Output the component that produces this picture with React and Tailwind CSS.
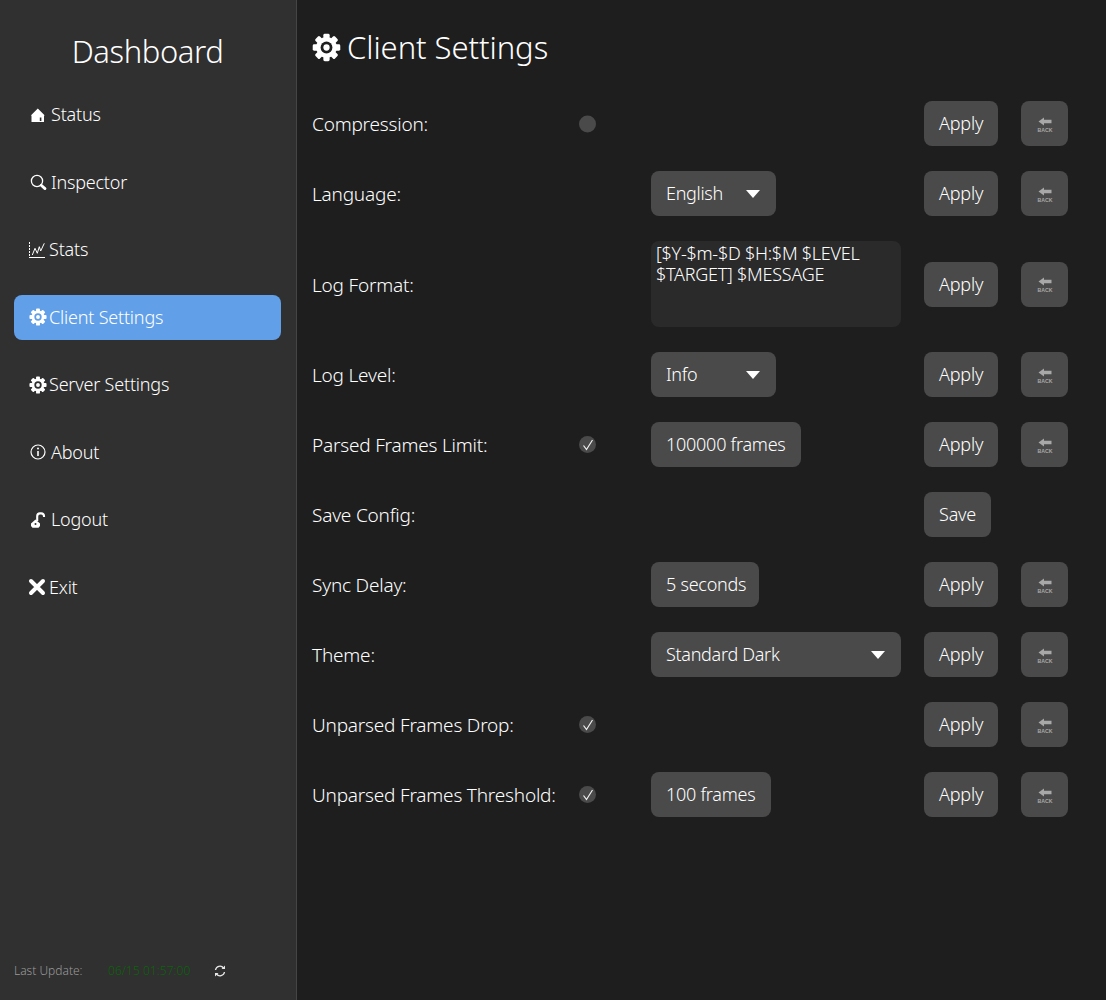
const FONT = "font-['Noto_Sans','Open_Sans',sans-serif]";

function Gear({ size = 18 }) {
  return (
    <svg width={size} height={size} viewBox="0 0 24 24" fill="currentColor" className="shrink-0">
      {[0, 45, 90, 135].map((a) => (
        <rect key={a} x="9.4" y="0.6" width="5.2" height="22.8" rx="1.2" transform={`rotate(${a} 12 12)`} />
      ))}
      <circle cx="12" cy="12" r="8.6" />
      <circle cx="12" cy="12" r="4.9" fill="var(--gear-bg)" />
      <circle cx="12" cy="12" r="2.6" />
    </svg>
  );
}

const Home = () => (
  <svg width="16" height="16" viewBox="0 0 16 16" fill="currentColor" fillRule="evenodd" className="shrink-0">
    <path d="M7.8 1.5 14.8 8.5H14V15H1.5V8.5H.8zM9.8 10.5V14H11.4V10.5z" />
  </svg>
);
const Search = () => (
  <svg width="18" height="18" viewBox="0 0 18 18" fill="none" stroke="currentColor" className="shrink-0">
    <circle cx="8" cy="8" r="5.6" strokeWidth="1.3" />
    <path d="M12.2 12.2 16 15.6" strokeWidth="2.8" strokeLinecap="round" />
  </svg>
);
const Chart = () => (
  <svg width="16" height="16" viewBox="0 0 16 16" fill="none" stroke="currentColor" className="shrink-0">
    <path d="M.5 0v15" strokeWidth="1" strokeDasharray="2 1" />
    <path d="M0 15.5H16" strokeWidth="1" />
    <path d="M3.3 13 6 6.3l2.3 5 2-6.6L11.7 9l3.6-7.7" strokeWidth="1" />
  </svg>
);
const Info = () => (
  <svg width="16" height="16" viewBox="0 0 16 16" fill="none" stroke="currentColor" className="shrink-0">
    <circle cx="8" cy="8" r="7" strokeWidth="1.2" />
    <path d="M8 7v5" strokeWidth="1.6" />
    <circle cx="8" cy="4.6" r="1" fill="currentColor" stroke="none" />
  </svg>
);
const Unlock = () => (
  <svg width="16" height="16" viewBox="0 0 16 16" className="shrink-0">
    <path d="M7.2 9V4.2a2.8 2.8 0 0 1 2.8-2.8h1.2A2.8 2.8 0 0 1 14 4v1" fill="none" stroke="currentColor" strokeWidth="2.1" />
    <path d="M1 11.5 5.5 7.5 10 11.5V14L8.5 15.8H2.5L1 14z" fill="currentColor" />
    <circle cx="5.5" cy="12" r="1" fill="#303030" />
  </svg>
);
const Close = () => (
  <svg width="18" height="18" viewBox="0 0 18 18" fill="none" stroke="currentColor" className="shrink-0">
    <path d="M3 3l12 12M15 3 3 15" strokeWidth="4" strokeLinecap="round" />
  </svg>
);
const Refresh = () => (
  <svg width="12" height="12" viewBox="0 0 12 12" fill="none" stroke="currentColor" className="shrink-0">
    <path d="M1.5 5A4.5 4.5 0 0 1 9.5 3" strokeWidth="1.3" />
    <path d="M10.5 7A4.5 4.5 0 0 1 2.5 9" strokeWidth="1.3" />
    <path d="M7.5 4h3.5V.5zM4.5 8H1v3.5z" fill="currentColor" stroke="none" />
  </svg>
);
const Back = () => (
  <svg width="16" height="16" viewBox="0 0 16 16" fill="#a8a8a8" className="shrink-0 translate-y-[0.5px]">
    <path d="M1.5 5 7 1V3.2H14.5V6.8H7V9z" />
    <text x="8" y="15" textAnchor="middle" fontSize="5.2" fontWeight="700" fontFamily="'Liberation Sans', sans-serif">BACK</text>
  </svg>
);
const Check = () => (
  <span className="w-[17px] h-[17px] rounded-full bg-[#4a4a4a] flex items-center justify-center">
    <svg width="14" height="14" viewBox="0 0 14 14" fill="none" stroke="#f0f0f0" strokeWidth="1.2">
      <path d="M2.5 7.5 5.5 11.5 11.5 2" />
    </svg>
  </span>
);
const Off = () => <span className="w-[17px] h-[17px] rounded-full bg-[#4a4a4a] block translate-y-[0.5px]" />;

const btn = "h-[45px] rounded-lg bg-[#4a4a4a] text-[#ffffff] text-[18px] font-light flex items-center whitespace-nowrap";

const Select = ({ w, children }) => (
  <div className={`${btn} ${w} tracking-[-0.3px] pl-[15px] pr-[16px] justify-between`}>
    <span className="-translate-y-[0.5px]">{children}</span>
    <svg width="14" height="8" viewBox="0 0 14 8" fill="#ffffff"><path d="M0 0h14L7 8z" /></svg>
  </div>
);
const Input = ({ w, children }) => <div className={`${btn} ${w} tracking-[-0.25px] px-[15px]`}>{children}</div>;

const rows = [
  ["Compression:", <Off />, null],
  ["Language:", null, <Select w="w-[125px]">English</Select>],
  [
    "Log Format:",
    null,
    <div className="h-[86px] w-[250px] rounded-lg bg-[#2a2a2a] text-[#ffffff] text-[18px] tracking-[-0.25px] font-light leading-[21px] px-[5px] pt-[2px] whitespace-nowrap">
      [$Y-$m-$D $H:$M $LEVEL
      <br />
      $TARGET] $MESSAGE
    </div>,
  ],
  ["Log Level:", null, <Select w="w-[125px]">Info</Select>],
  ["Parsed Frames Limit:", <Check />, <Input w="w-[150px]">100000 frames</Input>],
  ["Save Config:", null, null, "save"],
  ["Sync Delay:", null, <Input w="w-[108px]">5 seconds</Input>],
  ["Theme:", null, <Select w="w-[250px]">Standard Dark</Select>],
  ["Unparsed Frames Drop:", <Check />, null],
  ["Unparsed Frames Threshold:", <Check />, <Input w="w-[120px]">100 frames</Input>],
];

const nav = [
  [<Home />, "Status", "gap-[5px] pl-[16px]"],
  [<Search />, "Inspector", "gap-[4px] pl-[15px]"],
  [<Chart />, "Stats", "gap-[4px] pl-[15px]"],
  [<Gear size={18} />, "Client Settings", "gap-[2px] pl-[15px]", true],
  [<Gear size={18} />, "Server Settings", "gap-[2px] pl-[15px]"],
  [<Info />, "About", "gap-[5px] pl-[16px]"],
  [<Unlock />, "Logout", "gap-[5px] pl-[16px]"],
  [<Close />, "Exit", "gap-[3px] pl-[14px]"],
];

export default function App() {
  return (
    <div className={`${FONT} flex h-[1000px] bg-[#1e1e1e] overflow-hidden font-light`}>
      <aside className="w-[297px] shrink-0 bg-[#303030] border-r border-[#454545] flex flex-col px-[14px] [--gear-bg:#303030]">
        <h1 className="mt-[31px] h-[40px] leading-[40px] text-center text-[31px] tracking-[-0.4px] font-light text-[#ffffff] pr-[1px]">Dashboard</h1>
        <nav className="mt-[21px] flex flex-col gap-[22.5px] w-[267px]">
          {nav.map(([icon, label, cls, active]) => (
            <div
              key={label}
              className={`h-[45px] rounded-lg flex items-center text-[18px] tracking-[-0.2px] text-[#ffffff] ${cls} ${active ? "bg-[#619fe9] [--gear-bg:#619fe9]" : ""}`}
            >
              {icon}
              <span>{label}</span>
            </div>
          ))}
        </nav>
        <div className="mt-auto mb-[21px] h-[16px] flex items-center text-[12px]">
          <span className="w-[94px] text-[#9a9a9a]">Last Update:</span>
          <span className="w-[106px] text-[#0a640a] tracking-[0.05px]">06/15 01:57:00</span>
          <span className="text-[#e8e8e8]"><Refresh /></span>
        </div>
      </aside>
      <main className="flex-1 pl-[15px] [--gear-bg:#1e1e1e]">
        <div className="mt-[28px] h-[38px] flex items-center gap-[6px] text-[31px] tracking-[-0.05px] font-light text-[#ffffff]">
          <Gear size={29} />
          <span>Client Settings</span>
        </div>
        <div className="mt-[35px] grid grid-cols-[267px_72px_273px_97px_auto] gap-y-[25px] items-center justify-start">
          {rows.map(([label, toggle, field, save]) => (
            <div key={label} className="contents">
              <div className="text-[19px] tracking-[-0.2px] text-[#ffffff] font-light whitespace-nowrap pt-[2px]">{label}</div>
              <div>{toggle}</div>
              <div>{field}</div>
              <div className={`${btn} tracking-[-0.2px] px-[15px] w-fit`}>{save ? "Save" : "Apply"}</div>
              <div>
                {!save && (
                  <div className="w-[47px] h-[45px] rounded-lg bg-[#4a4a4a] flex items-center justify-center">
                    <Back />
                  </div>
                )}
              </div>
            </div>
          ))}
        </div>
      </main>
    </div>
  );
}
